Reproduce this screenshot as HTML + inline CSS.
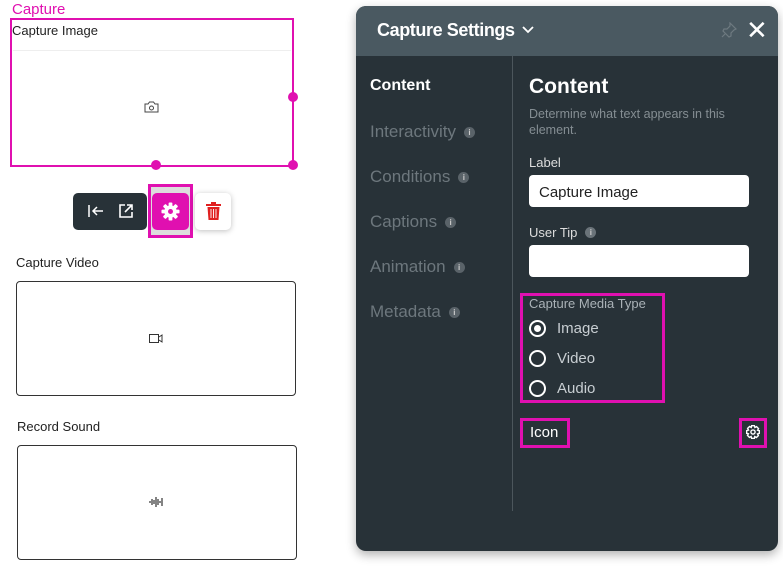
<!DOCTYPE html>
<html><head><style>
*{box-sizing:border-box;margin:0;padding:0}
body{width:783px;height:566px;background:#fff;font-family:"Liberation Sans",sans-serif;position:relative;overflow:hidden}
.a{position:absolute}
.t{font-size:13px;color:#222}
.panel{left:356px;top:6px;width:422px;height:545px;background:#283238;border-radius:10px;box-shadow:0 4px 10px rgba(0,0,0,.3);overflow:hidden}
.hdr{left:0;top:0;width:422px;height:50px;background:#4a5961}
.nav{font-size:17px;color:#6d777d}
.info{display:inline-block;width:11px;height:11px;border-radius:50%;background:#5a6369;color:#ccc;font-size:8px;text-align:center;line-height:11px;font-weight:bold;vertical-align:2px;margin-left:8px}
.pk{border:3px solid #e010b0}
.radio{width:17px;height:17px;border:2px solid #fff;border-radius:50%}
</style></head><body>
<div class="a" style="left:12px;top:1px;font-size:15px;color:#e010b0">Capture</div>
<div class="a pk" style="left:10px;top:18px;width:284px;height:149px;border-width:2px"></div>
<div class="a t" style="left:12px;top:23px">Capture Image</div>
<div class="a" style="left:13px;top:50px;width:278px;height:1px;background:#eee"></div>
<svg class="a" style="left:144px;top:101px" width="15" height="12" viewBox="0 0 15 12"><path d="M1 3h3l1.5-2h4L11 3h3v8H1z" fill="none" stroke="#444"/><circle cx="7.5" cy="7" r="2" fill="none" stroke="#444"/></svg>
<div class="a" style="left:288px;top:92px;width:10px;height:10px;border-radius:50%;background:#e010b0"></div>
<div class="a" style="left:151px;top:160px;width:10px;height:10px;border-radius:50%;background:#e010b0"></div>
<div class="a" style="left:288px;top:160px;width:10px;height:10px;border-radius:50%;background:#e010b0"></div>
<div class="a" style="left:73px;top:193px;width:74px;height:37px;background:#283238;border-radius:5px"></div>
<svg class="a" style="left:87px;top:204px" width="18" height="14" viewBox="0 0 18 14"><path d="M2 1v12M16 7H6M10 3L6 7l4 4" fill="none" stroke="#fff" stroke-width="1.5"/></svg>
<svg class="a" style="left:118px;top:203px" width="16" height="16" viewBox="0 0 16 16"><path d="M7 2H2v12h12V9M9 2h5v5M14 2L7 9" fill="none" stroke="#fff" stroke-width="1.6"/></svg>
<div class="a" style="left:148px;top:184px;width:45px;height:54px;border:3px solid #e010b0;background:#ddd"></div>
<div class="a" style="left:152px;top:193px;width:37px;height:37px;background:#e010b0;border-radius:5px"></div>
<svg class="a" style="left:161px;top:202px" width="19" height="19" viewBox="-10 -10 20 20"><g fill="#fff"><circle r="6.5"/><g id="tt"><rect x="-2" y="-9.5" width="4" height="5" rx="1"/></g><use href="#tt" transform="rotate(45)"/><use href="#tt" transform="rotate(90)"/><use href="#tt" transform="rotate(135)"/><use href="#tt" transform="rotate(180)"/><use href="#tt" transform="rotate(225)"/><use href="#tt" transform="rotate(270)"/><use href="#tt" transform="rotate(315)"/></g><circle r="2.6" fill="#e010b0"/></svg>
<div class="a" style="left:195px;top:193px;width:36px;height:37px;background:#fff;border-radius:5px;box-shadow:0 1px 6px rgba(0,0,0,.25)"></div>
<svg class="a" style="left:206px;top:201px" width="15" height="20" viewBox="0 0 15 20"><path d="M0 3h15v2H0zM5 1h5v2H5zM1.5 6h12l-1 13h-10z" fill="#e02020"/><path d="M5 8v9M7.5 8v9M10 8v9" stroke="#fff" stroke-width="0.9"/></svg>
<div class="a t" style="left:16px;top:255px">Capture Video</div>
<div class="a" style="left:16px;top:281px;width:280px;height:115px;border:1px solid #333;border-radius:4px"></div>
<svg class="a" style="left:149px;top:334px" width="14" height="9" viewBox="0 0 14 9"><rect x="0.5" y="0.5" width="9" height="8" fill="none" stroke="#333"/><path d="M10 3l3-2v7l-3-2" fill="none" stroke="#333"/></svg>
<div class="a t" style="left:17px;top:419px">Record Sound</div>
<div class="a" style="left:17px;top:445px;width:280px;height:115px;border:1px solid #333;border-radius:4px"></div>
<svg class="a" style="left:149px;top:496px" width="14" height="12" viewBox="0 0 14 12"><path d="M1 5v2M3 3v6M5 4v4M7 1v10M9 3v6M11 5v2M13 2v8" stroke="#333" stroke-width="1.2"/></svg>

<div class="a panel">
 <div class="a hdr"></div>
 <div class="a" style="left:21px;top:14px;color:#fff;font-size:18px;font-weight:bold;letter-spacing:-0.4px;white-space:nowrap">Capture Settings <svg width="12" height="8" viewBox="0 0 12 8" style="margin-left:3px;vertical-align:2px"><path d="M1 1l5 5 5-5" fill="none" stroke="#fff" stroke-width="1.8"/></svg></div>
 <svg class="a" style="left:365px;top:16px" width="16" height="16" viewBox="0 0 16 16"><path d="M9 1l6 6-2 1-3 3 0 3-2 1-6-6 1-2 3 0 3-3z M4 12l-3 3" fill="none" stroke="#6e7a80" stroke-width="1.2"/></svg>
 <div class="a" style="left:390px;top:9px;color:#fff;font-size:26px">&#10005;</div>
 <div class="a" style="left:156px;top:50px;width:1px;height:455px;background:#4c565c"></div>
 <div class="a" style="left:14px;top:71px;color:#fff;font-size:16px;font-weight:bold">Content</div>
 <div class="a nav" style="left:14px;top:116px">Interactivity<span class="info">i</span></div>
 <div class="a nav" style="left:14px;top:161px">Conditions<span class="info">i</span></div>
 <div class="a nav" style="left:14px;top:206px">Captions<span class="info">i</span></div>
 <div class="a nav" style="left:14px;top:251px">Animation<span class="info">i</span></div>
 <div class="a nav" style="left:14px;top:296px">Metadata<span class="info">i</span></div>
 <div class="a" style="left:173px;top:69px;color:#fff;font-size:21px;font-weight:bold">Content</div>
 <div class="a" style="left:173px;top:100px;color:#858e93;font-size:12.5px;line-height:16px;width:220px">Determine what text appears in this element.</div>
 <div class="a" style="left:173px;top:149px;color:#ddd;font-size:13px">Label</div>
 <div class="a" style="left:173px;top:169px;width:220px;height:32px;background:#fff;border-radius:4px;padding:9px 10px;font-size:15px;color:#222">Capture Image</div>
 <div class="a" style="left:173px;top:219px;color:#ddd;font-size:13px">User Tip<span class="info" style="background:#6a7379">i</span></div>
 <div class="a" style="left:173px;top:239px;width:220px;height:32px;background:#fff;border-radius:4px"></div>
 <div class="a pk" style="left:164px;top:287px;width:145px;height:110px"></div>
 <div class="a" style="left:173px;top:290px;color:#aab2b7;font-size:13px">Capture Media Type</div>
 <div class="a radio" style="left:173px;top:314px"><div style="width:7px;height:7px;border-radius:50%;background:#fff;margin:3px"></div></div>
 <div class="a" style="left:201px;top:314px;color:#c8ced2;font-size:15px">Image</div>
 <div class="a radio" style="left:173px;top:344px"></div>
 <div class="a" style="left:201px;top:344px;color:#c8ced2;font-size:15px">Video</div>
 <div class="a radio" style="left:173px;top:374px"></div>
 <div class="a" style="left:201px;top:374px;color:#c8ced2;font-size:15px">Audio</div>
 <div class="a pk" style="left:164px;top:412px;width:50px;height:30px"></div>
 <div class="a" style="left:174px;top:418px;color:#fff;font-size:15px">Icon</div>
 <div class="a pk" style="left:383px;top:412px;width:28px;height:30px"></div>
 <svg class="a" style="left:390px;top:419px" width="14" height="14" viewBox="-10 -10 20 20"><g fill="none" stroke="#fff" stroke-width="2"><circle r="3"/><path d="M-2-9h4l.7 2.6 2.4-1.3 2.8 2.8-1.3 2.4L9-2v4l-2.6.7 1.3 2.4-2.8 2.8-2.4-1.3L2 9h-4l-.7-2.6-2.4 1.3-2.8-2.8 1.3-2.4L-9 2v-4l2.6-.7-1.3-2.4 2.8-2.8 2.4 1.3z"/></g></svg>
</div>
</body></html>
